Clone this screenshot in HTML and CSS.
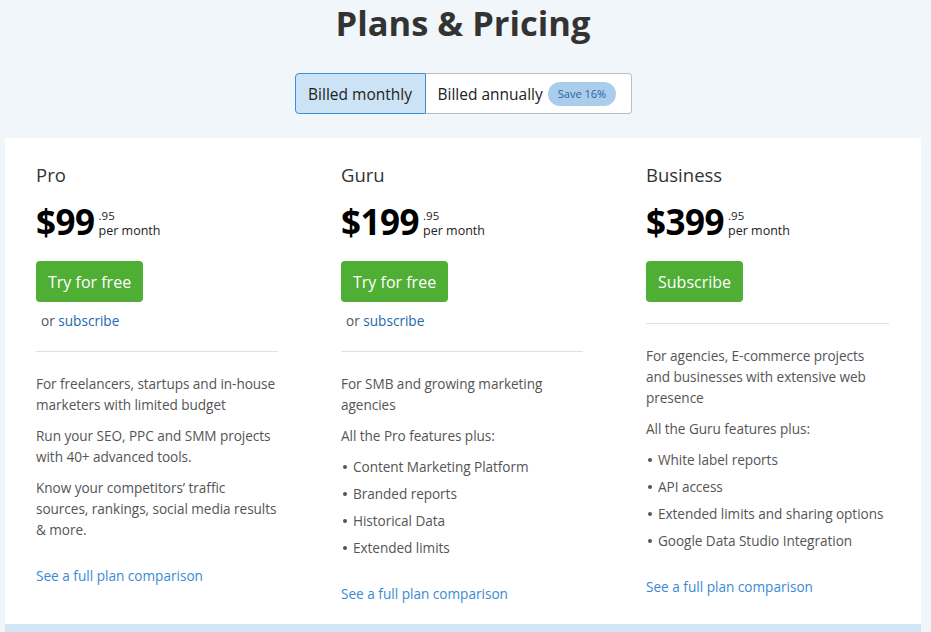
FILE: index.html
```html
<!DOCTYPE html>
<html lang="en">
<head>
<meta charset="utf-8">
<title>Plans &amp; Pricing</title>
<link rel="stylesheet" href="styles.css">
</head>
<body>
<div class="page">
  <h1 class="title">Plans &amp; Pricing</h1>
  <div class="toggle-wrap">
    <div class="toggle">
      <button class="seg seg-active">Billed monthly</button>
      <button class="seg seg-right">Billed annually <span class="badge">Save 16%</span></button>
    </div>
  </div>
  <div class="card">
    <div class="plan">
      <div class="plan-name">Pro</div>
      <div class="price"><span class="amount">$99</span><span class="price-side"><span class="cents">.95</span><span class="per">per month</span></span></div>
      <a class="btn" href="#">Try for free</a>
      <div class="or">or <a href="#">subscribe</a></div>
      <div class="divider"></div>
      <div class="desc">
        <p>For freelancers, startups and in-house<br>marketers with limited budget</p>
        <p>Run your SEO, PPC and SMM projects<br>with 40+ advanced tools.</p>
        <p>Know your competitors’ traffic<br>sources, rankings, social media results<br>&amp; more.</p>
      </div>
      <a class="compare" href="#">See a full plan comparison</a>
    </div>
    <div class="plan">
      <div class="plan-name">Guru</div>
      <div class="price"><span class="amount">$199</span><span class="price-side"><span class="cents">.95</span><span class="per">per month</span></span></div>
      <a class="btn" href="#">Try for free</a>
      <div class="or">or <a href="#">subscribe</a></div>
      <div class="divider"></div>
      <div class="desc">
        <p>For SMB and growing marketing<br>agencies</p>
        <p>All the Pro features plus:</p>
        <ul class="features">
          <li>Content Marketing Platform</li>
          <li>Branded reports</li>
          <li>Historical Data</li>
          <li>Extended limits</li>
        </ul>
      </div>
      <a class="compare" href="#">See a full plan comparison</a>
    </div>
    <div class="plan">
      <div class="plan-name">Business</div>
      <div class="price"><span class="amount">$399</span><span class="price-side"><span class="cents">.95</span><span class="per">per month</span></span></div>
      <a class="btn" href="#">Subscribe</a>
      <div class="divider divider-tight"></div>
      <div class="desc">
        <p>For agencies, E-commerce projects<br>and businesses with extensive web<br>presence</p>
        <p>All the Guru features plus:</p>
        <ul class="features">
          <li>White label reports</li>
          <li>API access</li>
          <li>Extended limits and sharing options</li>
          <li>Google Data Studio Integration</li>
        </ul>
      </div>
      <a class="compare" href="#">See a full plan comparison</a>
    </div>
  </div>
  <div class="strip"></div>
</div>
</body>
</html>
```
FILE: styles.css
```css
* { box-sizing: border-box; }
html, body { margin: 0; padding: 0; }
body {
  background: #f1f6fa;
  font-family: "Open Sans", "Noto Sans", "Liberation Sans", sans-serif;
  color: #333;
}
.page {
  width: 916px;
  margin-left: 5px;
}
.title {
  margin: 0;
  padding-top: 1px;
  text-align: center;
  font-size: 34.5px;
  line-height: 44px;
  font-weight: 700;
  color: #333;
}
.toggle-wrap {
  display: flex;
  justify-content: center;
  margin-top: 28px;
}
.toggle {
  display: flex;
  height: 41px;
}
.seg {
  font-family: inherit;
  font-size: 15.5px;
  color: #222;
  background: #fff;
  border: 1px solid #b9bec3;
  padding: 0 12px;
  display: flex;
  align-items: center;
  white-space: nowrap;
  cursor: pointer;
}
.seg-active {
  background: #cce3f5;
  border-color: #3f8fd2;
  border-radius: 4px 0 0 4px;
  width: 131px;
  justify-content: center;
}
.seg-right {
  border-left: none;
  border-radius: 0 4px 4px 0;
  width: 206px;
  gap: 5px;
}
.badge {
  display: inline-flex;
  align-items: center;
  height: 24px;
  padding: 0 10px;
  border-radius: 12px;
  background: #a9cdeb;
  color: #2765a0;
  font-size: 11px;
  white-space: nowrap;
}
.card {
  margin-top: 24px;
  background: #fff;
  display: grid;
  grid-template-columns: 242px 242px 243px;
  column-gap: 63px;
  padding: 25px 32px 20px 31px;
  align-items: start;
}
.plan {
  display: flex;
  flex-direction: column;
  align-items: flex-start;
}
.plan-name {
  font-size: 18.5px;
  line-height: 24px;
  color: #333;
}
.price {
  display: flex;
  align-items: flex-end;
  margin-top: 13px;
  height: 44px;
}
.amount {
  font-size: 35px;
  font-weight: 700;
  color: #000;
  line-height: 44px;
  letter-spacing: -0.5px;
}
.price-side {
  display: flex;
  flex-direction: column;
  margin-left: 4px;
  margin-bottom: 5px;
}
.cents {
  font-size: 11.5px;
  line-height: 15px;
  color: #222;
}
.per {
  font-size: 12.5px;
  line-height: 16px;
  color: #222;
}
.btn {
  margin-top: 17px;
  display: inline-flex;
  align-items: center;
  height: 41px;
  padding: 0 12px;
  border-radius: 4px;
  background: #4fae34;
  color: #fff;
  font-size: 16px;
  text-decoration: none;
}
.or {
  margin-top: 9px;
  margin-left: 5px;
  font-size: 13.6px;
  line-height: 20px;
  color: #555;
}
.or a {
  color: #1c68ad;
  text-decoration: none;
}
.divider {
  align-self: stretch;
  height: 1px;
  background: #dfe2e5;
  margin-top: 20px;
}
.divider-tight {
  margin-top: 21px;
}
.desc {
  margin-top: 21px;
  font-size: 13.6px;
  letter-spacing: -0.05px;
  line-height: 21px;
  color: #555;
  white-space: nowrap;
}
.desc p {
  margin: 0 0 10px 0;
}
.desc p:last-child {
  margin-bottom: 0;
}
.features {
  list-style: none;
  margin: 0;
  padding: 0;
}
.features li {
  position: relative;
  padding-left: 12px;
  margin-top: 6px;
}
.features li:first-child {
  margin-top: 0;
}
.features li::before {
  content: "";
  position: absolute;
  left: 2px;
  top: 9px;
  width: 4px;
  height: 4px;
  border-radius: 50%;
  background: #555;
}
.compare {
  margin-top: 25px;
  font-size: 13.6px;
  line-height: 21px;
  color: #3a8ad3;
  text-decoration: none;
}
.strip {
  height: 20px;
  background: #d3e5f4;
}
```
